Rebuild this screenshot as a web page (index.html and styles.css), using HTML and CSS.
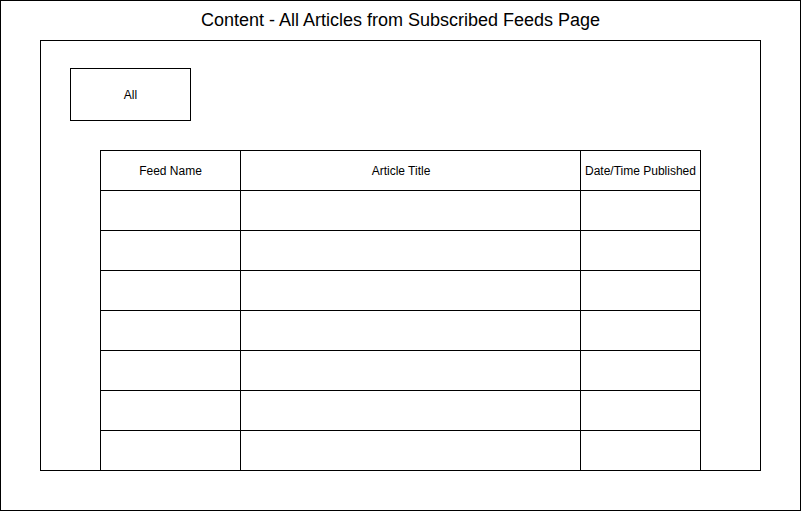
FILE: index.html
```html
<!DOCTYPE html>
<html>
<head>
<meta charset="utf-8">
<link rel="stylesheet" href="styles.css">
</head>
<body>
<div class="frame">
  <div class="title">Content - All Articles from Subscribed Feeds Page</div>
  <div class="panel">
    <div class="filter">All</div>
    <div class="grid">
      <div class="cell head">Feed Name</div>
      <div class="cell head head-title">Article Title</div>
      <div class="cell head">Date/Time Published</div>
      <div class="cell"></div><div class="cell"></div><div class="cell"></div>
      <div class="cell"></div><div class="cell"></div><div class="cell"></div>
      <div class="cell"></div><div class="cell"></div><div class="cell"></div>
      <div class="cell"></div><div class="cell"></div><div class="cell"></div>
      <div class="cell"></div><div class="cell"></div><div class="cell"></div>
      <div class="cell"></div><div class="cell"></div><div class="cell"></div>
      <div class="cell"></div><div class="cell"></div><div class="cell"></div>
    </div>
  </div>
</div>
</body>
</html>
```
FILE: styles.css
```css
html, body {
  margin: 0;
  padding: 0;
  background: #fff;
}
body {
  font-family: "Liberation Sans", Arial, Helvetica, sans-serif;
  color: #000;
}
.frame {
  width: 801px;
  height: 511px;
  box-sizing: border-box;
  border: 1px solid #000;
}
.title {
  height: 39px;
  display: flex;
  align-items: center;
  justify-content: center;
  font-size: 18px;
  padding-bottom: 1px;
  box-sizing: border-box;
}
.panel {
  margin-left: 39px;
  width: 721px;
  height: 431px;
  box-sizing: border-box;
  border: 1px solid #000;
  padding: 27px 0 0 29px;
}
.filter {
  width: 121px;
  height: 53px;
  box-sizing: border-box;
  border: 1px solid #000;
  display: flex;
  align-items: center;
  justify-content: center;
  font-size: 12px;
}
.grid {
  margin-top: 29px;
  margin-left: 30px;
  width: 601px;
  display: grid;
  grid-template-columns: 139px 339px 119px;
  grid-auto-rows: 39px;
  gap: 1px;
  padding: 1px 1px 0 1px;
  background: #000;
  box-sizing: border-box;
}
.cell {
  background: #fff;
}
.head {
  display: flex;
  align-items: center;
  justify-content: center;
  font-size: 12px;
}
.head-title {
  padding-right: 19px;
}
```
